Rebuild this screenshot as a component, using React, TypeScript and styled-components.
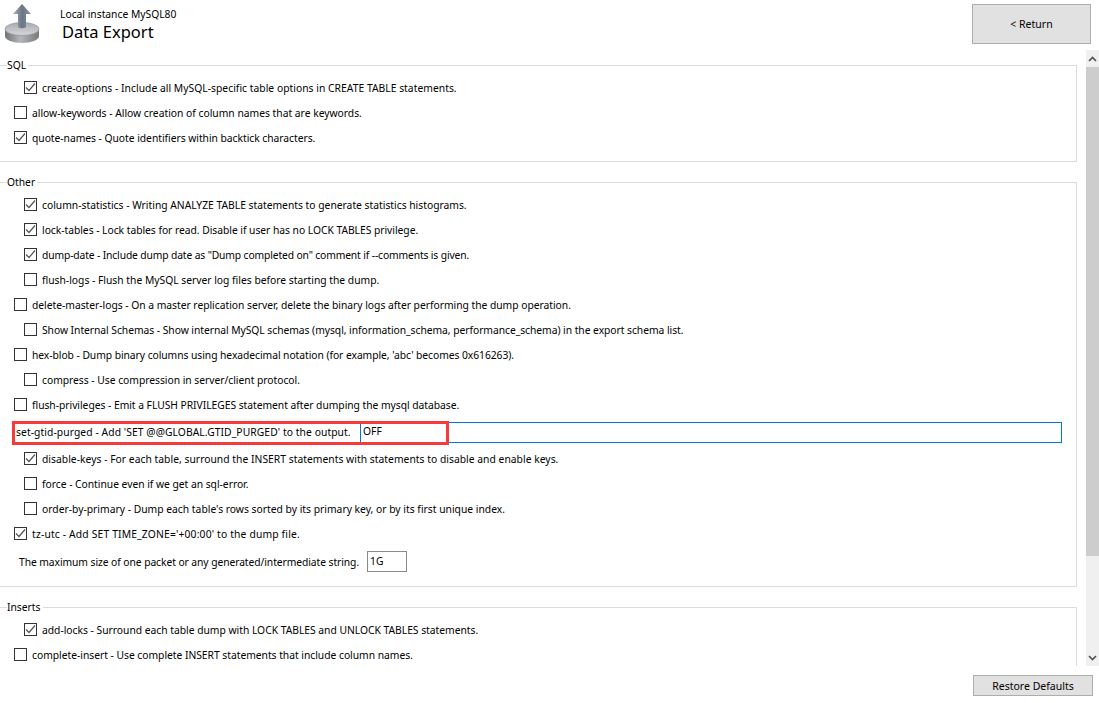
import React from "react";
import styled, { createGlobalStyle } from "styled-components";

const Global = createGlobalStyle`
  html, body { margin: 0; padding: 0; background: #fff; }
  body { font-family: "Noto Sans", "Open Sans", sans-serif; color: #000; overflow: hidden; }
  * { box-sizing: border-box; }
`;

const Page = styled.div`
  width: 1099px;
  height: 703px;
  display: flex;
  flex-direction: column;
  overflow: hidden;
  background: #fff;
`;

const Header = styled.header`
  height: 50px;
  flex: none;
  display: flex;
  justify-content: space-between;
  padding: 4px 8px 0 4px;
`;

const Brand = styled.div`
  display: flex;
`;

const Titles = styled.div`
  margin-left: 18px;
  padding-top: 3px;
`;

const Instance = styled.div`
  font-size: 10.3px;
  line-height: 14px;
`;

const Title = styled.div`
  font-size: 16.5px;
  line-height: 22px;
  margin-left: 2px;
`;

const ReturnButton = styled.button`
  width: 119px;
  height: 40px;
  background: #e1e1e1;
  border: 1px solid #adadad;
  font: 10.5px "Noto Sans", sans-serif;
  color: #000;
  padding: 0;
`;

const Middle = styled.div`
  height: 616px;
  flex: none;
  display: flex;
  justify-content: space-between;
`;

const ScrollArea = styled.main`
  width: 1077px;
  height: 616px;
  overflow: hidden;
  padding-top: 8px;
`;

const Group = styled.fieldset<{ $height?: number }>`
  margin: 0 0 13px;
  padding: 0;
  border: 1px solid #dcdcdc;
  border-left: none;
  min-inline-size: 0;
  height: ${(p) => p.$height}px;
  position: relative;
`;

const GroupLabel = styled.legend`
  font-size: 10.3px;
  line-height: 14px;
  padding: 0 2px 0 0;
  margin-left: 7px;
  background: #fff;
`;

const Rows = styled.div<{ $top: number }>`
  display: flex;
  flex-direction: column;
  padding-top: ${(p) => p.$top}px;
`;

const Row = styled.label<{ $indent: boolean; $track: number }>`
  height: 25px;
  display: flex;
  align-items: center;
  gap: 5px;
  padding-left: ${(p) => (p.$indent ? 24 : 14)}px;
  font-size: 10.3px;
  letter-spacing: ${(p) => p.$track}px;
  white-space: nowrap;
`;

const Box = styled.span`
  width: 13px;
  height: 13px;
  flex: none;
  border: 1px solid #333;
  background: #fff;
  display: flex;
  align-items: center;
  justify-content: center;
`;

const GtidRow = styled.div`
  height: 29px;
  display: flex;
  align-items: center;
  padding-left: 16px;
  position: relative;
  font-size: 10.3px;
  letter-spacing: 0.08px;
  white-space: nowrap;
`;

const GtidInput = styled.div`
  position: absolute;
  left: 360px;
  top: 5px;
  width: 702px;
  height: 21px;
  border: 1px solid #0078d7;
  padding: 0 2px;
  line-height: 17px;
  font-size: 10.3px;
`;

const Highlight = styled.div`
  position: absolute;
  left: 12px;
  top: 4px;
  width: 437px;
  height: 24px;
  border: 3px solid #f73a3a;
  pointer-events: none;
`;

const PacketRow = styled.div`
  height: 31px;
  display: flex;
  align-items: center;
  padding-left: 19px;
  font-size: 10.3px;
  white-space: nowrap;
`;

const PacketLabel = styled.span`
  letter-spacing: -0.07px;
`;

const SmallInput = styled.div`
  width: 40px;
  height: 21px;
  margin-left: 8px;
  border: 1px solid #8a8a8a;
  padding: 0 2px;
  line-height: 19px;
  font-size: 10.3px;
`;

const Scrollbar = styled.div`
  width: 13px;
  background: #f0f0f0;
  display: flex;
  flex-direction: column;
`;

const ScrollEnd = styled.div`
  height: 17px;
  flex: none;
  display: flex;
  align-items: center;
  justify-content: center;
`;

const Thumb = styled.div`
  height: 489px;
  flex: none;
  background: #cdcdcd;
`;

const Track = styled.div`
  flex: 1;
`;

const Footer = styled.footer`
  flex: 1;
  display: flex;
  justify-content: flex-end;
  padding: 9px 6px 0 0;
`;

const RestoreButton = styled.button`
  width: 120px;
  height: 21px;
  background: #e1e1e1;
  border: 1px solid #adadad;
  font: 10.5px "Noto Sans", sans-serif;
  color: #000;
  padding: 0;
`;

const Check = () => (
  <svg width="11" height="11" viewBox="0 0 11 11" fill="none">
    <path d="M1 5.5 L4 8.5 L10 1.5" stroke="#555" strokeWidth="1.2" />
  </svg>
);

const ExportIcon = () => (
  <svg width="38" height="42" viewBox="0 0 38 42">
    <defs>
      <linearGradient id="arrow" x1="0" y1="0" x2="1" y2="0">
        <stop offset="0" stopColor="#a9b0ba" />
        <stop offset="0.5" stopColor="#6a7585" />
        <stop offset="1" stopColor="#8d96a3" />
      </linearGradient>
      <linearGradient id="disk" x1="0" y1="0" x2="1" y2="0">
        <stop offset="0" stopColor="#6f7174" />
        <stop offset="0.45" stopColor="#b4b6b9" />
        <stop offset="1" stopColor="#77797c" />
      </linearGradient>
      <linearGradient id="diskTop" x1="0" y1="0" x2="0" y2="1">
        <stop offset="0" stopColor="#a9acb1" />
        <stop offset="1" stopColor="#d4d6d9" />
      </linearGradient>
    </defs>
    <path d="M1 25 V32 C1 36 9 39 18 39 C27 39 35 36 35 32 V25 Z" fill="url(#disk)" />
    <ellipse cx="18" cy="25" rx="17" ry="6.5" fill="url(#diskTop)" stroke="#96989c" strokeWidth="0.8" />
    <path d="M18 0 L27 10 H22 V23 C22 24.5 14 24.5 14 23 V10 H9 Z" fill="url(#arrow)" />
  </svg>
);

type Opt = { text: string; checked?: boolean; indent?: boolean; track?: number };

const sql: Opt[] = [
  { text: "create-options - Include all MySQL-specific table options in CREATE TABLE statements.", checked: true, indent: true, track: 0.03 },
  { text: "allow-keywords - Allow creation of column names that are keywords." },
  { text: "quote-names - Quote identifiers within backtick characters.", checked: true, track: -0.03 },
];

const otherA: Opt[] = [
  { text: "column-statistics - Writing ANALYZE TABLE statements to generate statistics histograms.", checked: true, indent: true },
  { text: "lock-tables - Lock tables for read. Disable if user has no LOCK TABLES privilege.", checked: true, indent: true, track: -0.03 },
  { text: 'dump-date - Include dump date as "Dump completed on" comment if --comments is given.', checked: true, indent: true, track: -0.13 },
  { text: "flush-logs - Flush the MySQL server log files before starting the dump.", indent: true },
  { text: "delete-master-logs - On a master replication server, delete the binary logs after performing the dump operation.", track: -0.02 },
  { text: "Show Internal Schemas - Show internal MySQL schemas (mysql, information_schema, performance_schema) in the export schema list.", indent: true, track: -0.04 },
  { text: "hex-blob - Dump binary columns using hexadecimal notation (for example, 'abc' becomes 0x616263).", track: -0.05 },
  { text: "compress - Use compression in server/client protocol.", indent: true, track: -0.02 },
  { text: "flush-privileges - Emit a FLUSH PRIVILEGES statement after dumping the mysql database.", track: -0.03 },
];

const otherB: Opt[] = [
  { text: "disable-keys - For each table, surround the INSERT statements with statements to disable and enable keys.", checked: true, indent: true, track: 0.03 },
  { text: "force - Continue even if we get an sql-error.", indent: true, track: -0.02 },
  { text: "order-by-primary - Dump each table's rows sorted by its primary key, or by its first unique index.", indent: true, track: 0.01 },
  { text: "tz-utc - Add SET TIME_ZONE='+00:00' to the dump file.", checked: true, track: 0.17 },
];

const inserts: Opt[] = [
  { text: "add-locks - Surround each table dump with LOCK TABLES and UNLOCK TABLES statements.", checked: true, indent: true, track: -0.01 },
  { text: "complete-insert - Use complete INSERT statements that include column names.", track: -0.02 },
];

const Options = ({ items }: { items: Opt[] }) => (
  <>
    {items.map((o) => (
      <Row key={o.text} $indent={!!o.indent} $track={o.track ?? 0}>
        <Box>{o.checked && <Check />}</Box>
        {o.text}
      </Row>
    ))}
  </>
);

export default function App() {
  return (
    <Page>
      <Global />
      <Header>
        <Brand>
          <ExportIcon />
          <Titles>
            <Instance>Local instance MySQL80</Instance>
            <Title>Data Export</Title>
          </Titles>
        </Brand>
        <ReturnButton>&lt; Return</ReturnButton>
      </Header>
      <Middle>
        <ScrollArea>
          <Group $height={104}>
            <GroupLabel>SQL</GroupLabel>
            <Rows $top={3}>
              <Options items={sql} />
            </Rows>
          </Group>
          <Group $height={412}>
            <GroupLabel>Other</GroupLabel>
            <Rows $top={3}>
              <Options items={otherA} />
              <GtidRow>
                set-gtid-purged - Add 'SET @@GLOBAL.GTID_PURGED' to the output.
                <GtidInput>OFF</GtidInput>
                <Highlight />
              </GtidRow>
              <Options items={otherB} />
              <PacketRow>
                <PacketLabel>The maximum size of one packet or any generated/intermediate string.</PacketLabel>
                <SmallInput>1G</SmallInput>
              </PacketRow>
            </Rows>
          </Group>
          <Group $height={200}>
            <GroupLabel>Inserts</GroupLabel>
            <Rows $top={3}>
              <Options items={inserts} />
            </Rows>
          </Group>
        </ScrollArea>
        <Scrollbar>
          <ScrollEnd>
            <svg width="9" height="6" viewBox="0 0 9 6" fill="none">
              <path d="M1 5 L4.5 1.5 L8 5" stroke="#505050" strokeWidth="1.6" />
            </svg>
          </ScrollEnd>
          <Thumb />
          <Track />
          <ScrollEnd>
            <svg width="9" height="6" viewBox="0 0 9 6" fill="none">
              <path d="M1 1 L4.5 4.5 L8 1" stroke="#505050" strokeWidth="1.6" />
            </svg>
          </ScrollEnd>
        </Scrollbar>
      </Middle>
      <Footer>
        <RestoreButton>Restore Defaults</RestoreButton>
      </Footer>
    </Page>
  );
}
